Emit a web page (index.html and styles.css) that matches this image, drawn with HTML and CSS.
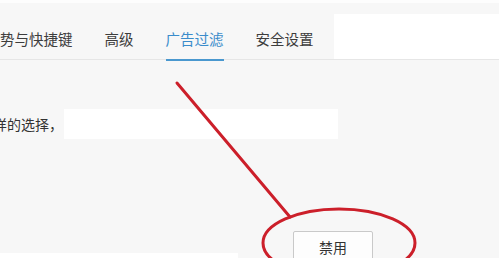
FILE: index.html
```html
<!DOCTYPE html>
<html lang="zh-CN">
<head>
<meta charset="utf-8">
<link rel="stylesheet" href="styles.css">
</head>
<body>
<div class="page">
  <div class="topstrip"></div>
  <div class="header">
    <div class="tab">势与快捷键</div>
    <div class="tab">高级</div>
    <div class="tab active">广告过滤</div>
    <div class="tab">安全设置</div>
    <div class="panel"></div>
  </div>
  <div class="content">
    <div class="row">
      <span class="label">样的选择，</span>
      <div class="field"></div>
    </div>
    <div class="bottom">
      <div class="strip"></div>
      <button class="btn">禁用</button>
    </div>
  </div>
  <svg class="annot" width="499" height="258" viewBox="0 0 499 258">
    <line x1="177" y1="83" x2="290" y2="217" stroke="#cc1f2a" stroke-width="3" stroke-linecap="round"/>
    <ellipse cx="339" cy="243" rx="76" ry="34" fill="none" stroke="#cc1f2a" stroke-width="3"/>
  </svg>
</div>
</body>
</html>
```

FILE: styles.css
```css
html, body {
  margin: 0;
  padding: 0;
}
body {
  background: #f7f7f7;
  font-family: "Noto Sans CJK SC", "Noto Sans", sans-serif;
  overflow: hidden;
  width: 499px;
  height: 258px;
}
.page {
  position: relative;
  width: 499px;
  height: 258px;
  overflow: hidden;
}
.topstrip {
  height: 3px;
  background: #fdfdfd;
}
.header {
  display: flex;
  height: 57px;
  border-bottom: 1px solid #e6e6e6;
  box-sizing: border-box;
}
.tab {
  position: relative;
  padding: 26px 16px 0;
  font-size: 14.5px;
  line-height: 20px;
  color: #3d3d3d;
  white-space: nowrap;
}
.tab:first-child {
  margin-left: -16px;
}
.tab.active {
  color: #3a8ccb;
}
.tab.active::after {
  content: "";
  position: absolute;
  left: 16px;
  right: 16px;
  bottom: -2px;
  height: 2px;
  background: #4a98cf;
}
.panel {
  flex: 1;
  margin-left: 4px;
  margin-top: 11px;
  background: #ffffff;
}
.content {
  display: flex;
  flex-direction: column;
}
.row {
  display: flex;
  align-items: center;
  margin-top: 49px;
  height: 30px;
}
.label {
  margin-left: -7px;
  font-size: 14px;
  color: #333333;
  white-space: nowrap;
}
.field {
  margin-left: 1px;
  width: 274px;
  height: 30px;
  background: #ffffff;
}
.bottom {
  display: flex;
  align-items: flex-start;
  margin-top: 92px;
}
.strip {
  width: 238px;
  height: 6px;
  margin-top: 22px;
  background: #ffffff;
}
.btn {
  margin-left: 55px;
  width: 80px;
  height: 32px;
  border: 1px solid #c9c9c9;
  border-radius: 2px;
  background: #fdfdfd;
  font-family: "Noto Sans CJK SC", "Noto Sans", sans-serif;
  font-size: 14px;
  color: #333333;
  padding: 0;
}
.annot {
  position: absolute;
  left: 0;
  top: 0;
  pointer-events: none;
}
```
